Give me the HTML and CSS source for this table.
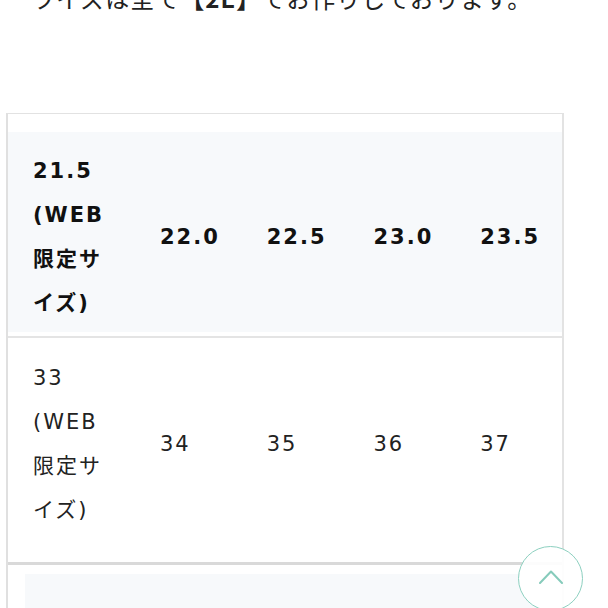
FILE: index.html
```html
<!DOCTYPE html>
<html lang="ja">
<head>
<meta charset="utf-8">
<title>サイズ表</title>
<link rel="stylesheet" href="styles.css">
</head>
<body>
<p class="lead">ワイズは全て<b>【2E】</b>でお作りしております。</p>
<div class="box">
  <table class="size-table">
    <colgroup>
      <col class="c-first">
      <col><col><col><col>
    </colgroup>
    <thead>
      <tr>
        <th>21.5<br>(WEB<br>限定サ<br>イズ)</th>
        <th>22.0</th>
        <th>22.5</th>
        <th>23.0</th>
        <th>23.5</th>
      </tr>
    </thead>
    <tbody>
      <tr>
        <td>33<br>(WEB<br>限定サ<br>イズ)</td>
        <td>34</td>
        <td>35</td>
        <td>36</td>
        <td>37</td>
      </tr>
    </tbody>
  </table>
  <div class="next">
    <div class="next-shade"></div>
  </div>
</div>
<a class="to-top" href="#" aria-label="ページトップへ">
  <svg width="24" height="14" viewBox="0 0 24 14" fill="none" stroke="#86cbbb" stroke-width="2" stroke-linecap="round" stroke-linejoin="round"><path d="M1 13 L12 1.5 L23 13"/></svg>
</a>
</body>
</html>
```

FILE: styles.css
```css
html, body {
  margin: 0;
  padding: 0;
  background: #ffffff;
  overflow: hidden;
}

body {
  font-family: "DejaVu Sans", "Noto Sans CJK JP", sans-serif;
  color: #1c1c1c;
}

.lead {
  margin: -20px 0 0 0;
  padding-left: 31px;
  font-family: "Noto Sans CJK JP", sans-serif;
  font-size: 24px;
  line-height: 36px;
  letter-spacing: 1px;
  color: #222;
  white-space: nowrap;
}

.lead b {
  font-weight: 700;
}

.box {
  margin: 97px 0 0 6px;
  width: 554px;
  border-top: 1px solid #e2e2e2;
  border-left: 2px solid #e0e0e0;
  border-right: 2px solid #e3e3e3;
  padding-top: 18px;
}

.size-table {
  width: 100%;
  border-collapse: separate;
  border-spacing: 0;
  table-layout: fixed;
  font-size: 21px;
  line-height: 44px;
  letter-spacing: 2px;
}

.c-first {
  width: 127px;
}

.size-table th,
.size-table td {
  text-align: left;
  vertical-align: middle;
  padding-left: 25px;
  padding-right: 0;
  white-space: nowrap;
}

.size-table th {
  font-weight: 700;
  color: #111;
  background: #f7f9fb;
  padding-top: 17px;
  padding-bottom: 7px;
  border-bottom: 4px solid #ffffff;
}

.size-table td {
  font-weight: 400;
  color: #222;
  padding-top: 18px;
  padding-bottom: 30px;
  border-top: 2px solid #e4e4e4;
  border-bottom: 3px solid #d9d9d9;
}

.next {
  padding: 9px 0 0 17px;
}

.next-shade {
  height: 60px;
  background: #f7f9fb;
}

.to-top {
  position: fixed;
  left: 518px;
  top: 546px;
  width: 65px;
  height: 65px;
  box-sizing: border-box;
  border: 1.5px solid #8ccfbf;
  border-radius: 50%;
  background: rgba(255, 255, 255, 0.92);
  display: flex;
  align-items: center;
  justify-content: center;
  padding-bottom: 4px;
}
```
